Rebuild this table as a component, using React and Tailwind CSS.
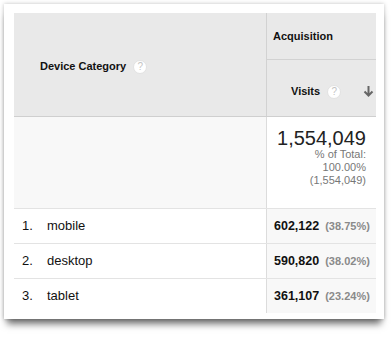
const ROWS = [
  { n: 1, name: 'mobile',  visits: '602,122', pct: '38.75%' },
  { n: 2, name: 'desktop', visits: '590,820', pct: '38.02%' },
  { n: 3, name: 'tablet',  visits: '361,107', pct: '23.24%' },
]

function HelpDot() {
  return (
    <span className="inline-flex items-center justify-center w-[14px] h-[14px] rounded-full bg-white border border-[#e2e2e2] text-[10px] leading-none text-[#c4c4c4] font-normal">
      ?
    </span>
  )
}

function ArrowDown() {
  return (
    <svg width="11" height="12" viewBox="0 0 11 12" className="text-[#666]">
      <path d="M5.5 1v9M1.5 6.5l4 4 4-4" fill="none" stroke="currentColor" strokeWidth="2" />
    </svg>
  )
}

export default function App() {
  return (
    <div className="w-[391px] h-[338px] bg-white pt-[4px] pl-[4px] font-['Liberation_Sans',Arial,sans-serif]">
      <div className="w-[380px] h-[315px] bg-white pt-[9px] pl-[10px] shadow-[0_0_4px_rgba(0,0,0,0.25),0_8px_7px_-3px_rgba(0,0,0,0.55)]">
        <div className="w-[362px]">

          {/* Header */}
          <div className="flex bg-[#e9e9e9] border-b border-[#cfcfcf] h-[104px]">
            <div className="w-[252px] flex items-center gap-[7px] pl-[26px] pt-[4px] text-[11px] font-bold text-[#111]">
              <span>Device Category</span>
              <HelpDot />
            </div>
            <div className="w-[110px] border-l border-[#d2d2d2] flex flex-col">
              <div className="h-[46px] flex items-center pl-[6px] text-[11px] font-bold text-[#111]">Acquisition</div>
              <div className="flex-1 border-t border-[#d2d2d2] flex items-center pl-[24px] pr-[2px] pt-[6px] text-[11px] font-bold text-[#111]">
                <span>Visits</span>
                <span className="ml-[7px]"><HelpDot /></span>
                <span className="ml-auto"><ArrowDown /></span>
              </div>
            </div>
          </div>

          {/* Totals */}
          <div className="flex h-[91px]">
            <div className="w-[252px] bg-[#f8f8f8]" />
            <div className="w-[110px] border-l border-[#dcdcdc] bg-white pt-[10px] pr-[10px] text-right">
              <div className="text-[20px] leading-[22px] text-[#222]">1,554,049</div>
              <div className="-mt-px text-[11px] leading-[13px] text-[#777]">
                <div>% of Total:</div>
                <div>100.00%</div>
                <div>(1,554,049)</div>
              </div>
            </div>
          </div>

          {/* Rows */}
          {ROWS.map(r => (
            <div key={r.n} className="flex h-[35px] border-t border-[#e3e3e3]">
              <div className="w-[252px] flex items-center pl-[8px] text-[13px] text-[#111]">
                <span className="w-[25px]">{r.n}.</span>
                <span>{r.name}</span>
              </div>
              <div className="w-[110px] border-l border-[#dcdcdc] bg-[#f8f8f8] flex items-center pl-[7px] font-bold">
                <span className="text-[12.5px] text-[#111]">{r.visits}</span>
                <span className="ml-[6px] text-[11px] text-[#8a8a8a]">({r.pct})</span>
              </div>
            </div>
          ))}
        </div>
      </div>
    </div>
  )
}
